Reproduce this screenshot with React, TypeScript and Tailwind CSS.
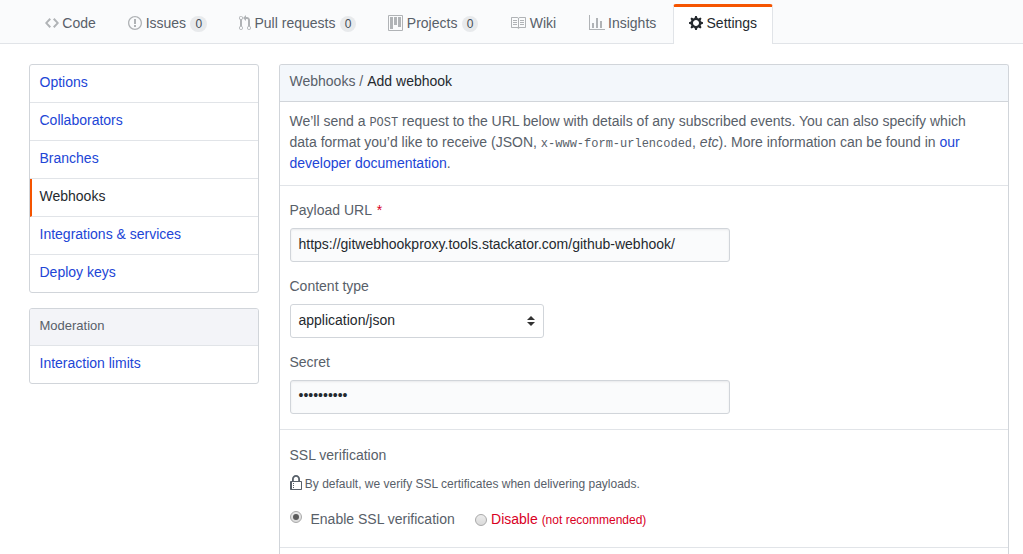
import React from "react";

type IconProps = { d: string; w: number; className?: string };

const Icon = ({ d, w, className = "" }: IconProps) => (
  <svg width={w} height={16} viewBox={`0 0 ${w} 16`} fill="currentColor" className={`shrink-0 ${className}`} aria-hidden="true">
    <path fillRule="evenodd" d={d} />
  </svg>
);

const icons = {
  code: "M9.5 3L8 4.5 11.5 8 8 11.5 9.5 13 14 8 9.5 3zm-5 0L0 8l4.5 5L6 11.5 2.5 8 6 4.5 4.5 3z",
  issue:
    "M7 2.3c3.14 0 5.7 2.56 5.7 5.7s-2.56 5.7-5.7 5.7A5.71 5.71 0 0 1 1.3 8c0-3.14 2.56-5.7 5.7-5.7zM7 1C3.14 1 0 4.14 0 8s3.14 7 7 7 7-3.14 7-7-3.14-7-7-7zm1 3H6v5h2V4zm0 6H6v2h2v-2z",
  pull: "M11 11.28V5c-.03-.78-.34-1.47-.94-2.06C9.46 2.35 8.78 2.03 8 2H7V0L4 3l3 3V4h1c.27.02.48.11.69.31.21.2.3.42.31.69v6.28A1.993 1.993 0 0 0 10 15a1.993 1.993 0 0 0 1-3.72zm-1 2.92c-.66 0-1.2-.55-1.2-1.2 0-.65.55-1.2 1.2-1.2.65 0 1.2.55 1.2 1.2 0 .65-.55 1.2-1.2 1.2zM4 3c0-1.11-.89-2-2-2a1.993 1.993 0 0 0-1 3.72v6.56A1.993 1.993 0 0 0 2 15a1.993 1.993 0 0 0 1-3.72V4.72c.59-.34 1-.98 1-1.72zm-.8 10c0 .66-.55 1.2-1.2 1.2-.65 0-1.2-.55-1.2-1.2 0-.65.55-1.2 1.2-1.2.65 0 1.2.55 1.2 1.2zM2 4.2C1.34 4.2.8 3.65.8 3c0-.65.55-1.2 1.2-1.2.65 0 1.2.55 1.2 1.2 0 .65-.55 1.2-1.2 1.2z",
  project:
    "M10 12h3V2h-3v10zm-4-2h3V2H6v8zm-4 4h3V2H2v12zm-1 1h13V1H1v14zM14 0H1a1 1 0 0 0-1 1v14a1 1 0 0 0 1 1h13a1 1 0 0 0 1-1V1a1 1 0 0 0-1-1z",
  book: "M3 5h4v1H3V5zm0 3h4V7H3v1zm0 2h4V9H3v1zm11-5h-4v1h4V5zm0 2h-4v1h4V7zm0 2h-4v1h4V9zm2-6v9c0 .55-.45 1-1 1H9.5l-1 1-1-1H2c-.55 0-1-.45-1-1V3c0-.55.45-1 1-1h5.5l1 1 1-1H15c.55 0 1 .45 1 1zm-8 .5L7.5 3H2v9h6V3.5zm7-.5H9.5l-.5.5V12h6V3z",
  graph: "M16 14v1H0V0h1v14h15zM5 13H3V8h2v5zm4 0H7V3h2v10zm4 0h-2V6h2v7z",
  gear: "M14 8.77v-1.6l-1.94-.64-.45-1.09.88-1.84-1.13-1.13-1.81.91-1.09-.45-.69-1.92h-1.6l-.63 1.94-1.11.45-1.84-.88-1.13 1.13.91 1.81-.45 1.09L0 7.23v1.59l1.94.64.45 1.09-.88 1.84 1.13 1.13 1.81-.91 1.09.45.69 1.92h1.59l.63-1.94 1.11-.45 1.84.88 1.13-1.13-.92-1.81.47-1.09L14 8.75v.02zM7 11c-1.66 0-3-1.34-3-3s1.34-3 3-3 3 1.34 3 3-1.34 3-3 3z",
  lock: "M4 13H3v-1h1v1zm8-6v7c0 .55-.45 1-1 1H1c-.55 0-1-.45-1-1V7c0-.55.45-1 1-1h1V4c0-2.2 1.8-4 4-4s4 1.8 4 4v2h1c.55 0 1 .45 1 1zM3.8 6h4.41V4c0-1.22-.98-2.2-2.2-2.2-1.22 0-2.2.98-2.2 2.2v2H3.8zM11 7H2v7h9V7zM4 8H3v1h1V8zm0 2H3v1h1v-1z",
};

type Tab = { label: string; icon: string; w: number; count?: number; active?: boolean };

const tabs: Tab[] = [
  { label: "Code", icon: icons.code, w: 14 },
  { label: "Issues", icon: icons.issue, w: 14, count: 0 },
  { label: "Pull requests", icon: icons.pull, w: 12, count: 0 },
  { label: "Projects", icon: icons.project, w: 15, count: 0 },
  { label: "Wiki", icon: icons.book, w: 16 },
  { label: "Insights", icon: icons.graph, w: 16 },
  { label: "Settings", icon: icons.gear, w: 14, active: true },
];

const RepoNav = () => (
  <nav className="flex h-11 items-end border-b border-[#e1e4e8] bg-[#fafbfc] pl-[29px]">
    {tabs.map((t) => (
      <a
        key={t.label}
        className={`-mb-px flex h-10 items-center gap-[3.85px] whitespace-nowrap rounded-t-[3px] border-x border-t-[3px] px-[15px] pb-[5px] ${
          t.active ? "ml-[0.4px] border-x-[#e1e4e8] border-t-[#f55400] bg-white pr-[14.5px] text-[#24292e]" : "border-transparent text-[#586069]"
        }`}
      >
        <Icon d={t.icon} w={t.w} className={t.active ? "" : "text-[#b0b3b6]"} />
        <span className="-ml-[0.5px] mr-[0.5px]">{t.label}</span>
        {t.count !== undefined && (
          <span className="mt-[2px] rounded-[20px] bg-[#e8eaec] px-[5px] text-[12px] leading-4 text-[#444d56]">{t.count}</span>
        )}
      </a>
    ))}
  </nav>
);

const menu = ["Options", "Collaborators", "Branches", "Webhooks", "Integrations & services", "Deploy keys"];

const Sidebar = () => (
  <aside className="w-[230px] shrink-0">
    <ul className="overflow-hidden rounded-[3px] border border-[#d1d5da]">
      {menu.map((m) => (
        <li
          key={m}
          className={`flex h-[38px] border-b border-[#e1e4e8] pt-[7px] last:h-[37px] last:border-b-0 ${
            m === "Webhooks" ? "border-l-2 border-l-[#f55400] pl-[7.5px] text-[#24292e]" : "pl-[9.5px] text-[#2145d6]"
          }`}
        >
          {m}
        </li>
      ))}
    </ul>
    <div className="mt-[15px] overflow-hidden rounded-[3px] border border-[#d1d5da]">
      <h4 className="h-[37px] border-b border-[#e1e4e8] bg-[#f3f4f8] pt-[6px] pl-[9.5px] text-[13px] text-[#586069]">Moderation</h4>
      <a className="block h-[37px] pt-[7px] pl-[9.5px] text-[#2145d6]">Interaction limits</a>
    </div>
  </aside>
);

const fieldBox =
  "flex h-[34px] w-[440px] rounded-[3px] border border-[#d1d5da] bg-[#fafbfc] px-[7.5px] text-[#24292e] shadow-[inset_0_1px_2px_rgba(27,31,35,0.075)]";

const Mono = ({ children }: { children: React.ReactNode }) => (
  <code className="font-['Liberation_Mono',monospace] text-[12px] leading-none">{children}</code>
);

const Radio = ({ on, className = "" }: { on?: boolean; className?: string }) => (
  <span
    className={`flex size-3 shrink-0 items-center justify-center rounded-full border border-[#a9a9a9] bg-linear-to-b from-[#ececec] to-[#dadada] ${className}`}
  >
    {on && <span className="size-1.5 rounded-full bg-[#5c5c5c]" />}
  </span>
);

const WebhookForm = () => (
  <main className="h-[490px] w-[730px] rounded-t-[3px] border border-b-0 border-[#d1d5da] text-[#586069]">
    <h3 className="h-[37px] rounded-t-[2px] border-b border-[#d1d5da] bg-[#f3f7fb] pt-[6px] pl-[9.5px]">
      Webhooks / <span className="ml-[0.2px] text-[#24292e]">Add webhook</span>
    </h3>
    <p className="h-[84px] whitespace-nowrap border-b border-[#e1e4e8] pt-[9px] pl-[9.5px]">
      We’ll send a <Mono>POST</Mono> request to the URL below with details of any subscribed events. You can also specify which
      <br />
      data format you’d like to receive (JSON, <Mono>x-www-form-urlencoded</Mono>, <em>etc</em>). More information can be found in{" "}
      <a className="text-[#2145d6]">our</a>
      <br />
      <a className="text-[#2145d6]">developer documentation</a>.
    </p>
    <section className="h-[244px] border-b border-[#e1e4e8] pt-[14px] pl-2.5">
      <div className="-ml-[0.5px] h-[28px]">
        Payload URL <span className="ml-[1.5px] text-[#d9001f]">*</span>
      </div>
      <div className={`${fieldBox} pt-[5px]`}>https://gitwebhookproxy.tools.stackator.com/github-webhook/</div>
      <div className="mt-[14px] -ml-[0.5px] h-[28px]">Content type</div>
      <div className="flex h-[34px] w-[254px] items-center justify-between rounded-[3px] border border-[#d1d5da] bg-white pr-2 pl-[7.5px] text-[#24292e]">
        <span className="-mt-0.5">application/json</span>
        <svg width="8" height="10" viewBox="0 0 8 10" fill="#333" aria-hidden="true">
          <path d="M0 4L4 0L8 4zM0 6H8L4 10z" />
        </svg>
      </div>
      <div className="mt-[14px] -ml-[0.5px] h-[28px]">Secret</div>
      <div className={`${fieldBox} pt-[4px]`}>••••••••••</div>
    </section>
    <section className="h-[118px] border-b border-[#e1e4e8] pt-[15px] pl-2.5">
      <div className="-ml-[0.5px]">SSL verification</div>
      <div className="mt-[9px] flex items-start gap-[2.8px] text-[12px] leading-[18px]">
        <Icon d={icons.lock} w={12} />
        <span>By default, we verify SSL certificates when delivering payloads.</span>
      </div>
      <div className="mt-[16px] flex h-[21px]">
        <Radio on className="mt-[2px]" />
        <span className="ml-[8.5px]">Enable SSL verification</span>
        <Radio className="mt-[5px] ml-[20.5px]" />
        <span className="ml-[3.8px] text-[#d9001f]">
          Disable <span className="text-[12px]">(not recommended)</span>
        </span>
      </div>
    </section>
  </main>
);

export default function App() {
  return (
    <div className="h-[554px] w-[1023px] overflow-hidden bg-white font-['Liberation_Sans',Arial,sans-serif] text-[14px] leading-[21px]">
      <RepoNav />
      <div className="flex gap-5 pt-5 pl-[29px]">
        <Sidebar />
        <WebhookForm />
      </div>
    </div>
  );
}
